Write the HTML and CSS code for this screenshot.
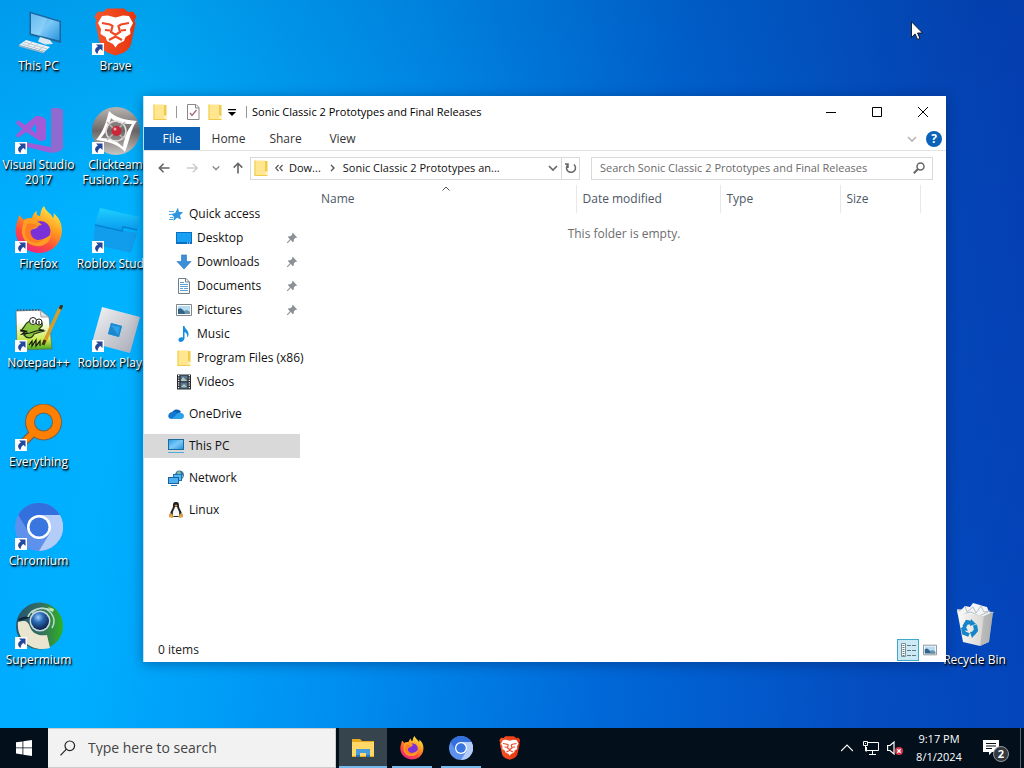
FILE: index.html
```html
<!DOCTYPE html>
<html lang="en">
<head>
<meta charset="utf-8">
<meta name="viewport" content="width=device-width, initial-scale=1">
<title>Desktop</title>
<link rel="stylesheet" href="styles.css">
</head>
<body>
<svg class="sprite" aria-hidden="true">
  <defs>
    <linearGradient id="gScreen" x1="0" y1="0" x2="1" y2="1"><stop offset="0" stop-color="#2f9fe6"/><stop offset=".5" stop-color="#7cc9f7"/><stop offset="1" stop-color="#2b93de"/></linearGradient>
    <linearGradient id="gBrave" x1="0" x2="1"><stop offset="0" stop-color="#f4562a"/><stop offset="1" stop-color="#e8330c"/></linearGradient>
    <linearGradient id="gFox" x1=".8" y1="0" x2=".25" y2="1"><stop offset="0" stop-color="#fff04a"/><stop offset=".4" stop-color="#ff9a1f"/><stop offset=".7" stop-color="#ff4a3d"/><stop offset="1" stop-color="#e8208c"/></linearGradient>
    <linearGradient id="gGrey" x1="0" y1="0" x2="0" y2="1"><stop offset="0" stop-color="#b8b4b2"/><stop offset=".5" stop-color="#6d6866"/><stop offset="1" stop-color="#c9c5c3"/></linearGradient>
    <linearGradient id="gStudio" x1="0" y1="0" x2="0" y2="1"><stop offset="0" stop-color="#1fd0ff"/><stop offset="1" stop-color="#0a9cf0"/></linearGradient>
    <linearGradient id="gPlayer" x1="0" y1="0" x2="1" y2="1"><stop offset="0" stop-color="#f4f5f7"/><stop offset="1" stop-color="#a5a8b4"/></linearGradient>
    <linearGradient id="gPad" x1="0" y1="0" x2="0" y2="1"><stop offset=".3" stop-color="#fff"/><stop offset=".75" stop-color="#c8ea4a"/><stop offset="1" stop-color="#3fa51c"/></linearGradient>
    <radialGradient id="gOrb" cx=".4" cy=".3" r=".7"><stop offset="0" stop-color="#9fd0ff"/><stop offset=".4" stop-color="#2b6cb6"/><stop offset="1" stop-color="#0a2148"/></radialGradient>
    <linearGradient id="gSuper" x1="0" x2="1"><stop offset="0" stop-color="#25556e"/><stop offset=".55" stop-color="#356f60"/><stop offset="1" stop-color="#2fb31f"/></linearGradient>
    <linearGradient id="gBin" x1="0" x2="1"><stop offset="0" stop-color="#fbfbfa"/><stop offset=".65" stop-color="#dedcd8"/><stop offset="1" stop-color="#b3b3b2"/></linearGradient>
  </defs>

  <symbol id="shortcut" viewBox="0 0 48 48">
    <path fill="#fff" d="M0 35h12v12H0z"/>
    <path fill="#24489c" d="M4 36.500h6.500v6.500L8.500 41c-2 1-2.500 2.500-3 5C2.500 44 2 40.500 6 38.500z"/>
  </symbol>
  <symbol id="pc" viewBox="0 0 48 48">
    <path fill="#1c669e" d="M14.500 3.500 46 13v22l-31.500-8z"/>
    <path fill="url(#gScreen)" d="M16 5.500 44.500 14v18.500L16 25.500z"/>
    <path fill="#a5dbfb" opacity=".45" d="m16 5.500 16 4.800-7 17.400-9-2.200z"/>
    <path fill="#d9e8f1" d="m25 29 10 3 3 4-8 .5-7-3z"/>
    <path fill="#eef3f6" d="m11 32 24 7-6 5-25-7z"/>
    <path fill="#9eb3c1" d="m4 37 25 7v1.500L4 38.500z"/>
    <path stroke="#b7c7d2" fill="none" d="m9 34 23 7M7 36l23 7M17 34l-5 4m11-2-5 4m11-2-5 4"/>
  </symbol>
  <symbol id="brave" viewBox="0 0 48 48">
    <path fill="url(#gBrave)" d="m15 .5-4 3.500-5-.5-3.500 5 2 4-1 3L8 36c1 4 3.500 6 7 8.500l8.500 3 8.500-3c3.500-2.500 6-4.500 7-8.500l4.500-20.500-1-3 2-4-3.500-5-5 .5-4-3.500z"/>
    <path fill="#fff" d="M16 7.500 10 8l-4 7 3 6-.5 5 5 3 1.500 4 6 3 2.500 3.500L26 36l6-3 1.500-4 5-3-.5-5 3-6-4-7-6-.5-7.500 2z"/>
    <path fill="none" stroke="#ef4824" stroke-width="2.200" d="m10 15 8 1.500 2.500 1.500-1.500 6 4.500 3 4.500-3-1.500-6 2.500-1.500 8-1.500M13 22l5 .5m16-.5-5 .5M17 32l6.500-3.500L30 32"/>
  </symbol>
  <symbol id="vs" viewBox="0 0 48 48">
    <path fill="#8f6bd0" d="M36 2c0-2 11-1 12 1v38c-1 3-9 6-12 4z"/>
    <path fill="#a25ad6" d="m9 35 27 5v6L8 39zM3 13l7 5 11-9c6 0 10 2 10 5v17c0 3-5 4-8 2l-12-8-8 6-2-3 6-6-6-6zm18 4-5 5 5 4z"/>
  </symbol>
  <symbol id="clickteam" viewBox="0 0 48 48">
    <circle cx="24" cy="24" r="24" fill="url(#gGrey)"/>
    <path fill="#fff" fill-rule="evenodd" d="M17 4c7 7 16 9 28 10-6 7-7 18-12 31-7-8-16-10-29-12 7-8 10-17 13-29zm2 7c-2 8-5 14-10 20 9 0 16 3 22 9 1-9 4-16 9-23-9 0-16-1-21-6z"/>
    <circle cx="24" cy="24" r="10" fill="none" stroke="#e3dedd" stroke-width="1.500"/>
    <path stroke="#b9b4b3" stroke-width="1.500" d="m15 15 18 18m0-18L15 33"/>
    <circle cx="24.500" cy="24" r="5" fill="#c9283b"/><circle cx="23" cy="22" r="1.500" fill="#f6a4aa"/>
  </symbol>
  <symbol id="firefox" viewBox="0 0 48 48">
    <path fill="url(#gFox)" d="M29 0c2 6 7 7 9 12 1-1 1-3 .5-5C47 14 48 23 46 31c-3 10-12 16-22 16S3 40 1 29C-.5 20 3 15 4 9l5 5c2-2 5-2 8-2 1-3 2-6 5-7-1 3 0 5 3 5 1-4 1-7 4-10z"/>
    <circle cx="25.500" cy="25" r="10" fill="#7a32d8"/>
    <path fill="#ffa022" d="M9 14c7-2 13 0 18 5-3 0-4 1-5 3-3 1-6 1-7 4 0 5 4 8 8 8 6 0 8-3 13-5-1 8-8 12-15 11-10-1-15-9-14-17z" opacity=".95"/>
    <path fill="#ff7b24" d="M12 18c5-1 8 0 11 2-3 1-6 2-8 5-1 8 7 12 14 8-7 8-20 2-19-8z"/>
  </symbol>
  <symbol id="studio" viewBox="0 0 48 48">
    <path fill="url(#gStudio)" d="m8 2 40 9-3 13-14-3-1 3-27-6z"/>
    <path fill="#129cec" d="m3 20 26 6 1-2 15 3-6 20-38-9z"/>
    <path fill="none" stroke="#0680cc" stroke-width="1.500" d="m3 19 27 6 1-4 14 3"/>
  </symbol>
  <symbol id="npp" viewBox="0 0 48 48">
    <path fill="url(#gPad)" stroke="#666" stroke-width=".7" d="m1 6 24-1 9 7 3 32-35 1z"/>
    <path stroke="#4d5661" stroke-width="1.400" stroke-dasharray="1.500 1.500" d="M2 5h23"/>
    <path fill="#dce4e8" stroke="#777" stroke-width=".6" d="m25 5 1 7h8z"/>
    <path fill="#8cc63e" stroke="#263b16" stroke-width="1.300" d="M9 22c2-5 7-8 12-5 3-3 7 0 6 4l-3 3 5 2-10 3c-2 5-7 5-10 1 2-1 3-2 3-3l-6-1z"/>
    <circle cx="18" cy="16" r="3.500" fill="#fff" stroke="#222"/><circle cx="24" cy="17" r="3" fill="#fff" stroke="#222"/>
    <path stroke="#111" fill="none" stroke-width="1.200" d="M18 15v3m6-2v3M5 25l6 1-4 3 8-1 6-2 8-1M14 40l3-4v5l4-6v6l4-5v5"/>
    <path stroke="#d99c26" stroke-width="3.500" d="M45 3 29 38"/><path stroke="#443018" stroke-width="3" d="m47 0-2 4M30 35l-2 5"/>
  </symbol>
  <symbol id="player" viewBox="0 0 48 48">
    <path fill="url(#gPlayer)" fill-rule="evenodd" d="m10 2 38 10-10 36L0 38zm9 16-3 11 11 3 3-11z"/>
    <path fill="#1e87cd" d="m19 18 11 3-3 11-11-3z"/><path fill="#2ea1e7" d="m19 20 9 2-2 8z"/>
  </symbol>
  <symbol id="everything" viewBox="0 0 48 48">
    <circle cx="28.500" cy="18" r="13.500" fill="none" stroke="#6d6254" stroke-width="10"/>
    <path stroke="#6d6254" stroke-width="8.500" d="m20 27-13 13"/>
    <circle cx="28.500" cy="18" r="13.500" fill="none" stroke="#ff8000" stroke-width="8"/>
    <path stroke="#ff8000" stroke-width="6" d="m20 27-13 13"/>
  </symbol>
  <symbol id="chromium" viewBox="0 0 48 48">
    <circle cx="24" cy="24" r="24" fill="#5e91ec"/>
    <path fill="#b4cdf8" d="M24 12h21a24 24 0 0 1-21 36l11-18z"/>
    <path fill="#3470dd" d="M3.200 12a24 24 0 0 1 41.600 0H24a12 12 0 0 0-11 16z"/>
    <circle cx="24" cy="24" r="12" fill="#fff"/><circle cx="24" cy="24" r="9.500" fill="#3976df"/>
  </symbol>
  <symbol id="supermium" viewBox="0 0 48 48">
    <circle cx="24.500" cy="24" r="23.500" fill="url(#gSuper)"/>
    <path fill="#e9e5cf" d="M3 20c7-2 10-1 12 5 3 8 11 9 17 8l3 13C17 51 1 38 3 20z"/>
    <path fill="#10263a" d="M3 17c6-3 9-3 14-2-4 1-8 3-13 4z"/>
    <path fill="none" stroke="#b9dccc" stroke-width="1.500" d="M13 15c3-9 16-12 23-4 4 5 4 10 1 15M17 11c5-6 14-6 21-2"/>
    <circle cx="25" cy="19" r="10.500" fill="#c9dbe2"/><circle cx="25" cy="19" r="9" fill="url(#gOrb)"/>
    <path fill="#c7f09a" d="m33 5 6 2-1 3z"/>
  </symbol>
  <symbol id="bin" viewBox="0 0 48 48">
    <path fill="#c6c9c9" d="m6 7 37 3-4 5-32-2z"/>
    <path fill="#f3f5f6" d="m8 10 6-6 5 1 3-4 7 2 3 1 4 1 2 5 3 2-6 5-23-1z"/>
    <path fill="none" stroke="#b4bdc4" d="m14 4 2 6 6-5 3 6 5-7 3 6 6-1M12 12l8-2 8 4 9-4"/>
    <path fill="url(#gBin)" d="m6 8 5 3 22 3 9-4-4 30-9 4-17-4z"/>
    <path fill="#a7a9aa" opacity=".6" d="m33 14 9-4-4 30-9 4z"/>
    <path fill="none" stroke="#1786c9" stroke-width="4" d="m13 25 3-5 5 1m3 2 1 5-3 4m-4 1-5-2-1-4"/>
    <path fill="#1786c9" d="m20 17 5 5-6 2zM27 29l-6 7-2-6zM9 27l5-4 3 6z"/>
  </symbol>

  <symbol id="folder" viewBox="0 0 16 16">
    <path fill="#ffe68f" d="M1.500.500h10.500v10.500l2.500 1V16h-13z"/><path fill="#f0cb4a" d="M1.500.500h1V16h-1zM12 1h2.500v11L12 11zM1.500 15h13v1h-13z"/><path fill="#fff" d="M12.800 12h.8v3h-.8z"/>
  </symbol>
  <symbol id="props" viewBox="0 0 16 16"><path fill="#fff" stroke="#888" d="M2.500.500H11l3 3v12H2.500z"/><path fill="none" stroke="#888" d="M10.500 1v3H14"/><path fill="none" stroke="#a36a72" stroke-width="1.300" d="m5 9 2 2.500L11.500 6"/></symbol>
  <symbol id="star" viewBox="0 0 16 16"><path fill="#2f96df" d="m10 1.500.8 4.200 4.200.5-3 3 1 4.300-4-1.800L5.500 15l.3-4.500L3 8l4-1z"/><path stroke="#4fa9e4" d="M1 5.500h5M1 8.500h4m-3 3h3m-4 2h4"/></symbol>
  <symbol id="desk" viewBox="0 0 16 16"><path fill="#0b6ec0" d="M0 2h16v12H0z"/><path fill="#16a1f4" d="M1 3h14v9H1z"/><path fill="#e7f6ff" d="M11 12.500h1v1h-1zm2 0h1v1h-1z"/></symbol>
  <symbol id="down" viewBox="0 0 16 16"><path fill="#3b8fdb" stroke="#256fb8" stroke-width=".6" d="M5.500 1h5v6.500H15l-7 7.500-7-7.500h4.500z"/></symbol>
  <symbol id="doc" viewBox="0 0 16 16"><path fill="#fff" stroke="#6f7e89" d="M2.500.500H10l3.500 3.500v11.500h-11z"/><path fill="none" stroke="#5b9fd4" d="M4 4.500h4m-4 2h8m-8 2h8m-8 2h3m1 0h4m-8 2h8"/><path fill="none" stroke="#6f7e89" d="M9.500.500V4H13"/></symbol>
  <symbol id="pic" viewBox="0 0 16 16"><path fill="#fff" stroke="#7d878d" d="M.500 2.500h15v11H.500z"/><path fill="#b5dcf4" d="M2 4h12v8H2z"/><path fill="#33658b" d="M2 7c3-2 4 0 6 2l6 1v2H2z"/><path fill="#6d94a5" d="m8 9 3-1 3 2v2H9z"/></symbol>
  <symbol id="music" viewBox="0 0 16 16"><path fill="#198ddd" d="M7 0h1.500c.5 3.500 4.500 4 4 9-.5 1.500-1 2-1.500 2 .5-3-.5-4-2.500-5v6c0 2-1.500 3.500-3.500 4-2 0-3-1-2.500-2.500C3 11.500 5 11 7 11.500z"/></symbol>
  <symbol id="video" viewBox="0 0 16 16"><path fill="#25282d" d="M1 .500h14v15H1z"/><path fill="#59788f" d="M4.500 1.500h7v6h-7zm0 7h7v6h-7z"/><path fill="#b4c4b9" d="m5 6 2-3 4 4H5zm0 7 3-3 3 3z"/><path stroke="#fff" stroke-width="1.300" stroke-dasharray="1.200 1.200" d="M2.700 1v14m10.600-14v14"/></symbol>
  <symbol id="cloud" viewBox="0 0 16 16"><path fill="#0a5fae" d="M4 8c0-5 7-6 9-2l-5 4z"/><path fill="#1078cf" d="M4 6c3-1 4 0 7 2l-7 5C-1 13-1 7 4 6z"/><path fill="#2ba2e9" d="M8 9c2-3 4-3 5-2 4 0 4 6 0 6H4z"/></symbol>
  <symbol id="monitor" viewBox="0 0 16 16"><path fill="#1c6c9d" d="M0 1h16v11H0z"/><path fill="url(#gScreen)" d="M1 2h14v9H1z"/><path fill="#56a8d4" d="M0 14h16v1H0z"/></symbol>
  <symbol id="net" viewBox="0 0 16 16"><circle cx="11.500" cy="5" r="4.500" fill="#3976a3"/><path fill="#87bd9a" d="m9 2 3-1 1 3-3 2zm3 5 3-2v2z"/><path fill="#1b72b7" d="M5 4h9v7H5z"/><path fill="#54b9f2" d="M6 5h7v5H6z"/><path fill="#1464a6" d="M0 7h11v7H0z"/><path fill="#4eb1ef" d="M1 8h9v5H1z"/><path fill="#1b72b7" d="M3 15h6v1H3z"/></symbol>
  <symbol id="tux" viewBox="0 0 16 16"><path fill="#222" d="M8 0c3 0 3 2 3 4 0 3 3 5 3 9l-2 2H4l-2-2c0-4 3-6 3-9 0-2 0-4 3-4z"/><path fill="#f6f6f4" d="M7 5h2c1 3 3 5 2 9H5c-1-4 1-6 2-9z"/><path fill="#dba24a" d="m6.500 3.500 1.500-1 1.500 1L8 5zM1 12l2-1 3 4-2 1-3-1zm14 0-2-1-3 4 2 1 3-1z"/></symbol>
  <symbol id="pin" viewBox="0 0 12 12"><path fill="#8a9095" d="m7 0 5 5-1 1-1-.2L8 8l.2 2-1 1-2.700-2.600L1 12H0v-1l3.600-3.500L1 4.800l1-1 2 .2L6.200 2 6 1z"/></symbol>
  <symbol id="mag" viewBox="0 0 16 16"><circle cx="9.800" cy="5.800" r="4.800" fill="none" stroke="currentColor" stroke-width="1.200"/><path stroke="currentColor" stroke-width="1.200" d="M6.400 9.200.500 15.300"/></symbol>
  <symbol id="chev" viewBox="0 0 10 10"><path fill="none" stroke="currentColor" stroke-width="1.600" d="m1 3 4 4 4-4"/></symbol>
</svg>

<div class="screen">
  <main class="desktop">
    <a class="shortcut" href="#"><svg class="art"><use href="#pc"/></svg><span>This PC</span></a>
    <a class="shortcut" href="#"><svg class="art"><use href="#vs"/><use href="#shortcut"/></svg><span>Visual Studio 2017</span></a>
    <a class="shortcut" href="#"><svg class="art"><use href="#firefox"/><use href="#shortcut"/></svg><span>Firefox</span></a>
    <a class="shortcut" href="#"><svg class="art"><use href="#npp"/><use href="#shortcut"/></svg><span>Notepad++</span></a>
    <a class="shortcut" href="#"><svg class="art"><use href="#everything"/><use href="#shortcut"/></svg><span>Everything</span></a>
    <a class="shortcut" href="#"><svg class="art"><use href="#chromium"/><use href="#shortcut"/></svg><span>Chromium</span></a>
    <a class="shortcut" href="#"><svg class="art"><use href="#supermium"/><use href="#shortcut"/></svg><span>Supermium</span></a>
    <a class="shortcut" href="#"><svg class="art"><use href="#brave"/><use href="#shortcut"/></svg><span>Brave</span></a>
    <a class="shortcut" href="#"><svg class="art"><use href="#clickteam"/><use href="#shortcut"/></svg><span>Clickteam Fusion 2.5...</span></a>
    <a class="shortcut nowrap" href="#"><svg class="art"><use href="#studio"/><use href="#shortcut"/></svg><span>Roblox Studio</span></a>
    <a class="shortcut nowrap" href="#"><svg class="art"><use href="#player"/><use href="#shortcut"/></svg><span>Roblox Player</span></a>
    <a class="shortcut recycle" href="#"><svg class="art"><use href="#bin"/></svg><span>Recycle Bin</span></a>

    <section class="window" aria-label="File Explorer">
      <header class="titlebar">
        <svg class="i16"><use href="#folder"/></svg>
        <i class="sep"></i>
        <button class="quick" aria-label="Properties"><svg class="i16"><use href="#props"/></svg></button>
        <button class="quick" aria-label="New folder"><svg class="i16"><use href="#folder"/></svg></button>
        <button class="quick more" aria-label="Customize toolbar"><svg class="i8" viewBox="0 0 8 8"><path d="M0 1h8v1.200H0zM0 4h8L4 8z"/></svg></button>
        <i class="sep"></i>
        <h1>Sonic Classic 2 Prototypes and Final Releases</h1>
        <button class="caption" aria-label="Minimize"><svg class="i10" viewBox="0 0 10 10"><path d="M0 5h10v1H0z"/></svg></button>
        <button class="caption" aria-label="Maximize"><svg class="i10" viewBox="0 0 10 10"><path fill="none" stroke="#000" d="M.500.500h9v9h-9z"/></svg></button>
        <button class="caption" aria-label="Close"><svg class="i10" viewBox="0 0 10 10"><path stroke="#000" d="m0 0 10 10M10 0 0 10"/></svg></button>
      </header>

      <nav class="ribbon" aria-label="Ribbon">
        <button class="file">File</button><button>Home</button><button>Share</button><button>View</button>
        <button class="expand" aria-label="Expand ribbon"><svg class="i10"><use href="#chev"/></svg></button>
        <button class="help" aria-label="Help">?</button>
      </nav>

      <div class="toolbar">
        <button class="nav" aria-label="Back"><svg class="i12" viewBox="0 0 14 14"><path fill="none" stroke="#666" stroke-width="1.900" d="M13.500 7H1.500m5-5-5 5 5 5"/></svg></button>
        <button class="nav" aria-label="Forward"><svg class="i12" viewBox="0 0 14 14"><path fill="none" stroke="#ccc" stroke-width="1.700" d="M1 7h12M8 2l5 5-5 5"/></svg></button>
        <button class="nav recent" aria-label="Recent locations"><svg class="i8"><use href="#chev"/></svg></button>
        <button class="nav up" aria-label="Up"><svg class="i12" viewBox="0 0 14 14"><path fill="none" stroke="#666" stroke-width="1.900" d="M7 13.500V1.500m-5 5 5-5 5 5"/></svg></button>
        <div class="address">
          <svg class="i16"><use href="#folder"/></svg>
          <button class="crumb-more" aria-label="Parent folders"><svg class="i8" viewBox="0 0 8 8"><path fill="none" stroke="#555" stroke-width="1.200" d="M3.500 1 .800 4l2.700 3M7.500 1 4.800 4l2.700 3"/></svg></button>
          <button class="crumb">Dow...</button>
          <svg class="i8 arrow" viewBox="0 0 8 8"><path fill="none" stroke="#555" stroke-width="1.400" d="m2 1 3 3-3 3"/></svg>
          <button class="crumb last">Sonic Classic 2 Prototypes an...</button>
          <button class="drop" aria-label="Previous locations"><svg class="i10"><use href="#chev"/></svg></button>
          <button class="refresh" aria-label="Refresh"><svg class="i12" viewBox="0 0 12 12"><path fill="none" stroke="#666" stroke-width="1.500" d="M3 2.500a4.500 4.500 0 1 0 6 0M3 6V2H0"/></svg></button>
        </div>
        <div class="find">
          <input type="search" aria-label="Search folder" placeholder="Search Sonic Classic 2 Prototypes and Final Releases">
          <button aria-label="Search"><svg class="i12" viewBox="0 0 12 12"><circle cx="7.500" cy="4.500" r="3.500" fill="none" stroke="#666" stroke-width="1.500"/><path stroke="#666" stroke-width="2" d="M5 7 .800 11.200"/></svg></button>
        </div>
      </div>

      <div class="body">
        <nav class="tree" aria-label="Folders">
          <div class="group">
            <a href="#"><svg class="i16"><use href="#star"/></svg>Quick access</a>
            <a class="child" href="#"><svg class="i16"><use href="#desk"/></svg>Desktop<svg class="i10 pinned"><use href="#pin"/></svg></a>
            <a class="child" href="#"><svg class="i16"><use href="#down"/></svg>Downloads<svg class="i10 pinned"><use href="#pin"/></svg></a>
            <a class="child" href="#"><svg class="i16"><use href="#doc"/></svg>Documents<svg class="i10 pinned"><use href="#pin"/></svg></a>
            <a class="child" href="#"><svg class="i16"><use href="#pic"/></svg>Pictures<svg class="i10 pinned"><use href="#pin"/></svg></a>
            <a class="child" href="#"><svg class="i16"><use href="#music"/></svg>Music</a>
            <a class="child" href="#"><svg class="i16"><use href="#folder"/></svg>Program Files (x86)</a>
            <a class="child" href="#"><svg class="i16"><use href="#video"/></svg>Videos</a>
          </div>
          <a href="#"><svg class="i16"><use href="#cloud"/></svg>OneDrive</a>
          <a class="selected" href="#"><svg class="i16"><use href="#monitor"/></svg>This PC</a>
          <a href="#"><svg class="i16"><use href="#net"/></svg>Network</a>
          <a href="#"><svg class="i16"><use href="#tux"/></svg>Linux</a>
        </nav>
        <table class="files">
          <thead><tr>
            <th class="name" scope="col">Name<svg class="sort" viewBox="0 0 8 5"><path fill="none" stroke="#555" d="m.500 4.500 3.500-3.500 3.500 3.500"/></svg></th>
            <th class="date" scope="col">Date modified</th><th class="type" scope="col">Type</th><th class="size" scope="col">Size</th><td></td>
          </tr></thead>
          <tbody><tr><td class="empty" colspan="5">This folder is empty.</td></tr></tbody>
        </table>
      </div>

      <footer class="status">
        <span>0 items</span>
        <button class="active" aria-label="Details view"><svg class="i16" viewBox="0 0 16 16"><path fill="#fff" stroke="#7c9299" d="M1.500 1.500h4v13h-4z"/><path stroke="#667980" stroke-dasharray="1 1" stroke-width="2" d="M3.500 3v11"/><path stroke="#667980" d="M7 3.500h4m1 0h4m-9 5h4m1 0h4m-9 5h4m1 0h4"/></svg></button>
        <button aria-label="Large icons view"><svg class="i14" viewBox="0 0 16 16"><use href="#pic"/></svg></button>
      </footer>
    </section>

    <svg class="pointer" viewBox="0 0 12 19"><path fill="#fff" stroke="#000" stroke-width=".8" d="M.500.800v15.500l3.600-3.400 2.500 5.500 2.300-1-2.400-5.400h5z"/></svg>
  </main>

  <footer class="taskbar">
    <button class="start" aria-label="Start"><svg class="i16" viewBox="0 0 16 16"><path fill="#fff" d="m0 2.300 6.500-.9v6.100H0zm7.300-1L16 0v7.500H7.300zM0 8.300h6.500v6.200L0 13.600zm7.300 0H16V16l-8.700-1.300z"/></svg></button>
    <div class="tasksearch"><svg class="i16"><use href="#mag"/></svg><input type="text" aria-label="Search" placeholder="Type here to search"></div>
    <div class="apps">
      <button class="app open current" aria-label="File Explorer"><svg class="i24" viewBox="0 0 24 24"><path fill="#e8a91e" d="M1 3h8l2 2h12v16H1z"/><path fill="#ffd868" d="M1 6h22v14H1z"/><path fill="#459bdc" d="M5 21v-8h14v8h-4v-4H9v4z"/><path fill="#2573b8" d="M5 19h4v2H5zm10 0h4v2h-4z"/></svg></button>
      <button class="app open" aria-label="Firefox"><svg class="i24"><use href="#firefox"/></svg></button>
      <button class="app open" aria-label="Chromium"><svg class="i24"><use href="#chromium"/></svg></button>
      <button class="app" aria-label="Brave"><svg class="i24"><use href="#brave"/></svg></button>
    </div>
    <div class="tray">
      <button aria-label="Show hidden icons"><svg class="i12" viewBox="0 0 12 12"><path fill="none" stroke="#fff" stroke-width="1.200" d="m0 9 6-6 6 6"/></svg></button>
      <button aria-label="Network"><svg class="i16" viewBox="0 0 16 16"><path fill="none" stroke="#fff" d="M5 2.500h10.500v8h-12V7M9.500 11v3M6 14.500h7M.500 1.500h4v4h-4zM2.500 5.500V11H4"/><path fill="#fff" d="M2 3h1v1H2z"/></svg></button>
      <button aria-label="Volume muted"><svg class="i16" viewBox="0 0 16 16"><path fill="none" stroke="#fff" stroke-width="1.200" d="M.600 5.500H3L7 2v12l-4-3.500H.600z"/><circle cx="12" cy="11" r="4" fill="#d8344a"/><path stroke="#fff" stroke-width="1.300" d="m10.300 9.300 3.400 3.400m0-3.400-3.400 3.400"/></svg></button>
      <time datetime="2024-08-01T21:17">9:17 PM<br>8/1/2024</time>
      <button class="notify" aria-label="Notifications"><svg class="i16" viewBox="0 0 16 16"><path fill="#fff" d="M0 0h16v12H9l-3 3v-3H0z"/><path stroke="#07101c" d="M3 3.500h10m-10 2.500h10m-10 2.500h6"/></svg><b>2</b></button>
      <i class="peek"></i>
    </div>
  </footer>
</div>
</body>
</html>
```

FILE: styles.css
```css
* { box-sizing: border-box; }
body { margin: 0; font: 12px/16px "Open Sans", "Noto Sans", sans-serif; color: #111; }
button { margin: 0; padding: 0; border: 0; background: none; font: inherit; color: inherit; display: flex; align-items: center; justify-content: center; flex: none; }
input { border: 0; padding: 0; background: none; font: inherit; min-width: 0; outline: 0; appearance: none; }
a { color: inherit; text-decoration: none; }
svg { flex: none; display: block; }
.sprite { position: absolute; width: 0; height: 0; }
.i8 { width: 8px; height: 8px; }
.i10 { width: 10px; height: 10px; }
.i12 { width: 12px; height: 12px; }
.i14 { width: 14px; height: 14px; }
.i16 { width: 16px; height: 16px; }
.i24 { width: 24px; height: 24px; }

.screen { min-height: 100vh; display: flex; flex-direction: column; }
.desktop {
  flex: 1; position: relative; overflow: hidden;
  display: grid; grid-template-columns: 77px 77px 1fr 77px; grid-template-rows: repeat(7, 99px); grid-auto-flow: column;
  padding: 8px 11px 0 0;
  background:
    linear-gradient(180deg, rgba(0, 40, 120, .14), rgba(0, 120, 255, 0) 30%, rgba(0, 130, 255, .12)),
    linear-gradient(97deg, #00adff 0%, #00b4ff 14%, #0090ee 38%, #0064d2 62%, #0446b8 86%, #043cb2 100%);
}
.shortcut { display: flex; flex-direction: column; align-items: center; gap: 2px; line-height: 15px; text-align: center; color: #fff; text-shadow: 1px 1px 1px #000, 1px 2px 2px rgba(0, 0, 0, .8); }
.shortcut .art { width: 48px; height: 48px; }
.nowrap { white-space: nowrap; }
.recycle { grid-column: 4; grid-row: 7; }
.pointer { position: absolute; left: 911px; top: 21px; width: 12px; height: 19px; }

.window { position: absolute; inset: 96px 78px 66px 143px; display: flex; flex-direction: column; background: #fff; border-left: 1px solid #b5e4fb; box-shadow: 0 2px 12px rgba(0, 20, 70, .4); }
.titlebar { height: 31px; display: flex; align-items: center; padding-left: 8px; }
.sep { width: 1px; height: 12px; background: #999; margin: 0 5px 0 8px; }
.quick { width: 22px; height: 22px; }
.more { width: 12px; }
.titlebar h1 { flex: 1; margin: 0; font-size: 11px; font-weight: 400; white-space: nowrap; color: #000; }
.caption { width: 46px; height: 31px; }
.ribbon { height: 24px; display: flex; align-items: center; border-bottom: 1px solid #e2e2e2; color: #333; }
.ribbon button { width: 57px; height: 23px; }
.ribbon .file { width: 56px; background: #0c61b4; color: #fff; }
.ribbon .expand { width: 20px; margin-left: auto; color: #b5b5b5; }
.ribbon .help { width: 16px; height: 16px; margin: 0 4px; border-radius: 8px; background: #0b62b8; color: #fff; font-weight: 700; }
.toolbar { height: 34px; display: flex; align-items: center; padding: 0 13px 0 6px; }
.nav { width: 28px; height: 24px; }
.nav.recent { width: 20px; color: #777; }
.nav.up { width: 24px; }
.address { flex: 332; height: 23px; min-width: 0; display: flex; align-items: center; border: 1px solid #d9d9d9; padding-left: 2px; white-space: nowrap; font-size: 11px; }
.crumb-more { width: 20px; }
.crumb { margin-right: 8px; }
.arrow { margin-right: 6px; }
.crumb.last { margin-right: auto; }
.drop { width: 16px; color: #666; }
.refresh { width: 18px; height: 21px; border-left: 1px solid #d9d9d9; }
.find { flex: 338; height: 23px; min-width: 0; margin-left: 11px; display: flex; align-items: center; border: 1px solid #d9d9d9; padding-left: 8px; font-size: 11px; }
.find input { flex: 1; }
.find input::placeholder { color: #6a6a6a; opacity: 1; }
.find button { width: 26px; }

.body { flex: 1; display: flex; align-items: flex-start; min-height: 0; }
.tree { width: 156px; flex: none; display: flex; flex-direction: column; gap: 8px; padding-top: 17px; }
.tree a { height: 24px; display: flex; align-items: center; gap: 5px; padding: 0 3px 0 24px; white-space: nowrap; }
.tree .child { padding-left: 32px; }
.tree .pinned { margin-left: auto; }
.tree .selected { background: #d9d9d9; }
.files { flex: 1; margin: 0 3px 0 5px; border-collapse: collapse; table-layout: fixed; color: #4c5766; }
.files th { position: relative; height: 28px; padding: 0 0 0 6px; font-weight: 400; text-align: left; border-right: 1px solid #e8e8e8; }
.files .name { width: 271px; padding-left: 16px; }
.files .date { width: 144px; }
.files .type { width: 120px; }
.files .size { width: 80px; }
.sort { position: absolute; left: 137px; top: 1px; width: 8px; height: 5px; }
.files .empty { padding: 13px 0 0; text-align: center; color: #6d6d6d; }
.status { height: 25px; display: flex; align-items: center; padding: 0 5px 0 14px; }
.status span { margin-right: auto; color: #222; }
.status button { width: 22px; height: 22px; }
.status .active { background: #cbeaf5; border: 1px solid #3fa9c9; }

.taskbar { height: 40px; display: flex; background: #03101c; color: #fff; }
.start { width: 48px; }
.tasksearch { width: 288px; display: flex; align-items: center; gap: 12px; padding-left: 12px; background: #f2f2f2; border: 1px solid #ccc; border-left: 0; color: #222; }
.tasksearch input { flex: 1; font-size: 14px; }
.tasksearch input::placeholder { color: #444; opacity: 1; }
.apps { display: flex; gap: 1px; margin-left: 3px; }
.app { width: 48px; position: relative; }
.app.open::after { content: ""; position: absolute; left: 4px; right: 4px; bottom: 0; height: 2px; background: #76b9ed; }
.app.current { background: #36444e; }
.app.current::after { left: 0; right: 0; }
.tray { margin-left: auto; display: flex; align-items: stretch; }
.tray button { width: 24px; }
.tray time { width: 64px; padding-top: 2px; font-size: 11px; line-height: 18px; text-align: center; white-space: nowrap; }
.tray .notify { width: 48px; position: relative; margin-right: 1px; padding-right: 8px; }
.notify b { position: absolute; left: 22px; top: 18px; width: 16px; height: 16px; border: 1px solid #999; border-radius: 8px; background: #333a42; font-size: 11px; line-height: 14px; }
.peek { width: 4px; border-left: 1px solid #5b6470; }
```
